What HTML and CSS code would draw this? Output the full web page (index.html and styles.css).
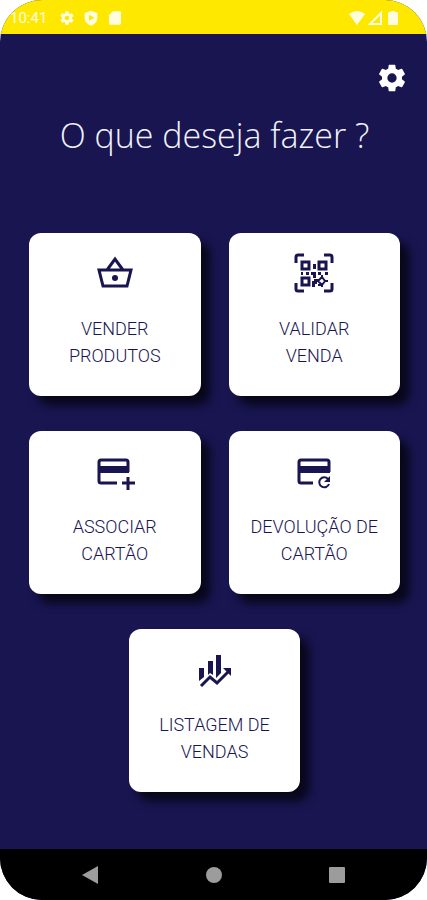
FILE: index.html
```html
<!DOCTYPE html>
<html lang="pt">

<head>
    <meta charset="UTF-8">
    <meta name="viewport" content="width=device-width, initial-scale=1">
    <title>O que deseja fazer ?</title>
    <link rel="stylesheet" href="styles.css">
</head>

<body>
    <div class="screen">
        <!-- Barra de estado -->
        <header class="status-bar">
            <span class="time">10:41</span>
            <svg class="status-icon" viewBox="0 0 24 24"><use href="#gear"/></svg>
            <svg class="status-icon" viewBox="0 0 24 24">
                <path d="M12 1 21.500 4.500V12c0 5.500-4 9.500-9.500 11.500C6.500 21.500 2.500 17.500 2.500 12V4.500z"/>
                <path class="cut" d="m9 7 8 4.500L9 16z"/>
            </svg>
            <svg class="status-icon" viewBox="0 0 24 24">
                <path d="M9 2h10q2 0 2 2v16q0 2-2 2H5q-2 0-2-2V8z"/>
            </svg>
            <div class="signals">
                <svg class="signal" viewBox="0 0 16 16"><path d="M0 4q8-6 16 0L8 15z"/></svg>
                <svg class="signal" viewBox="0 0 16 16"><path class="line" d="M3 14 14 3v11z"/></svg>
                <svg class="signal" viewBox="0 0 16 16"><path d="M6 1h4v1h2q1 0 1 1v11q0 1-1 1H4q-1 0-1-1V3q0-1 1-1h2z"/></svg>
            </div>
        </header>

        <main class="content">
            <button class="settings" type="button" aria-label="Definições">
                <svg viewBox="0 0 24 24">
                    <path id="gear" fill-rule="evenodd" d="M19.430 12.980c.04-.32.07-.64.07-.98s-.03-.66-.07-.98l2.110-1.650c.19-.15.24-.42.12-.64l-2-3.460c-.12-.22-.39-.3-.61-.22l-2.490 1c-.52-.4-1.080-.73-1.690-.98l-.38-2.650C14.460 2.180 14.250 2 14 2h-4c-.25 0-.46.18-.49.42l-.38 2.650c-.61.25-1.170.59-1.690.98l-2.490-1c-.23-.09-.49 0-.61.22l-2 3.460c-.13.22-.07.49.12.64l2.110 1.650c-.04.32-.07.65-.07.98s.03.66.07.98l-2.110 1.650c-.19.15-.24.42-.12.64l2 3.460c.12.22.39.3.61.22l2.490-1c.52.4 1.080.73 1.690.98l.38 2.650c.03.24.24.42.49.42h4c.25 0 .46-.18.49-.42l.38-2.650c.61-.25 1.170-.59 1.690-.98l2.490 1c.23.09.49 0 .61-.22l2-3.460c.12-.22.07-.49-.12-.64zM12 15.500a3.500 3.500 0 1 1 0-7 3.500 3.500 0 0 1 0 7z"/>
                </svg>
            </button>

            <h1>O que deseja fazer ?</h1>

            <div class="menu">
                <button class="card" type="button">
                    <svg class="icon" viewBox="0 0 40 40">
                        <path class="line" d="M12 17 20 6l8 11M4 17h32l-4 16H8z"/>
                        <circle cx="20" cy="25" r="3"/>
                    </svg>
                    <span>VENDER<br>PRODUTOS</span>
                </button>
                <button class="card" type="button">
                    <svg class="icon" viewBox="0 0 40 40">
                        <path class="line" d="M2 10V4q0-2 2-2h6M30 2h6q2 0 2 2v6M2 30v6q0 2 2 2h6M30 38h6q2 0 2-2v-6"/>
                        <path class="line" d="M8 9h7v7H8zM25 9h7v7h-7zM8 25h7v7H8z"/>
                        <path d="M19 11h3v5h-3zM7 19h2v3H7zM12 19h3v3h-3zM17 19h5v6h-3v-3h-2zM24 19h3v3h-3zM31 19h3v3h-3zM20 26h5v3h-2v2h-2v3h-3v-6h2zM24 31h3v2h-3z"/>
                        <path class="line thin" d="m28 24 3 4-3 4-4-4zM28 22v2M28 32v2M31 28h3"/>
                    </svg>
                    <span>VALIDAR<br>VENDA</span>
                </button>
                <button class="card" type="button">
                    <svg class="icon" viewBox="0 0 40 40">
                        <path class="line" d="M22 32H6q-2 0-2-2V11q0-2 2-2h25q2 0 2 2v10M33 26v13M27 32h13"/>
                        <path d="M4 15h30v7H4z"/>
                    </svg>
                    <span>ASSOCIAR<br>CARTÃO</span>
                </button>
                <button class="card" type="button">
                    <svg class="icon" viewBox="0 0 40 40">
                        <path class="line" d="M19 32H7q-2 0-2-2V11q0-2 2-2h26q2 0 2 2v10"/>
                        <path d="M5 15h31v7H5z"/>
                        <path class="line thin" d="M34 28a5 5 0 1 0 1 5"/>
                        <path d="M36 25v6h-6z"/>
                    </svg>
                    <span>DEVOLUÇÃO DE<br>CARTÃO</span>
                </button>
                <button class="card" type="button">
                    <svg class="icon" viewBox="0 0 40 40">
                        <path d="M4 19h5v9l-5 4zM13 12h5v14l-3-2-2 2zM21 6h5v18l-5 5z"/>
                        <path class="line" d="m6 37 9-9 7 6 12-12"/>
                        <path d="M28 19h8v8z"/>
                    </svg>
                    <span>LISTAGEM DE<br>VENDAS</span>
                </button>
            </div>
        </main>

        <!-- Navegação do sistema -->
        <nav class="nav-bar">
            <button type="button" aria-label="Voltar"><svg viewBox="0 0 18 18"><path d="M17 0v18L1 9z"/></svg></button>
            <button type="button" aria-label="Início"><svg viewBox="0 0 18 18"><circle cx="9" cy="9" r="8"/></svg></button>
            <button type="button" aria-label="Recentes"><svg viewBox="0 0 18 18"><rect x="1" y="1" width="16" height="16" rx="1"/></svg></button>
        </nav>
    </div>
</body>

</html>
```

FILE: styles.css
```css
* {
    box-sizing: border-box;
}

body {
    margin: 0;
    background-color: white;
    font-family: Roboto, "Liberation Sans", sans-serif;
}

button {
    border: none;
    padding: 0;
    font-family: inherit;
    cursor: pointer;
}

svg {
    display: block;
    fill: currentColor;
}

.line {
    fill: none;
    stroke: currentColor;
    stroke-width: 3;
}

.thin {
    stroke-width: 2;
}

.screen {
    display: flex;
    flex-direction: column;
    min-height: 100vh;
    border-radius: 42px;
    overflow: hidden;
    background-color: #181551;
}

.status-bar {
    display: flex;
    align-items: center;
    gap: 8px;
    height: 34px;
    padding: 2px 26px 0 10px;
    background-color: #ffe800;
    color: #fffce0;
}

.time {
    margin-right: 4px;
    font-size: 15px;
}

.status-icon {
    width: 16px;
    height: 16px;
}

.cut {
    fill: #ffe800;
}

.signals {
    display: flex;
    gap: 2px;
    margin-left: auto;
}

.signal {
    width: 16px;
    height: 16px;
}

.signal .line {
    stroke-width: 2;
}

.content {
    flex: 1;
    display: flex;
    flex-direction: column;
    padding: 28px 27px 55px 29px;
}

.settings {
    align-self: flex-end;
    margin-right: -8px;
    background: none;
    color: white;
}

.settings svg {
    width: 32px;
    height: 32px;
}

h1 {
    margin: 16px 0 73px;
    color: #f2f2f8;
    font-family: "Open Sans", "Noto Sans", sans-serif;
    font-size: 34px;
    font-weight: 300;
    line-height: 50px;
    text-align: center;
}

.menu {
    display: flex;
    flex-wrap: wrap;
    justify-content: center;
    gap: 35px 28px;
}

.card {
    display: flex;
    flex-direction: column;
    align-items: center;
    gap: 22px;
    width: calc(50% - 14px);
    padding: 20px 8px 27px;
    border-radius: 12px;
    background-color: white;
    box-shadow: 9px 9px 10px rgba(0, 0, 0, 0.7);
    color: #181551;
    font-size: 18px;
    font-weight: 300;
    line-height: 27px;
}

.icon {
    width: 40px;
    height: 40px;
}

.nav-bar {
    display: flex;
    justify-content: space-between;
    align-items: center;
    height: 51px;
    padding: 0 81px;
    background-color: black;
}

.nav-bar button {
    background: none;
    color: #9c9c9c;
}

.nav-bar svg {
    width: 18px;
    height: 18px;
}
```
